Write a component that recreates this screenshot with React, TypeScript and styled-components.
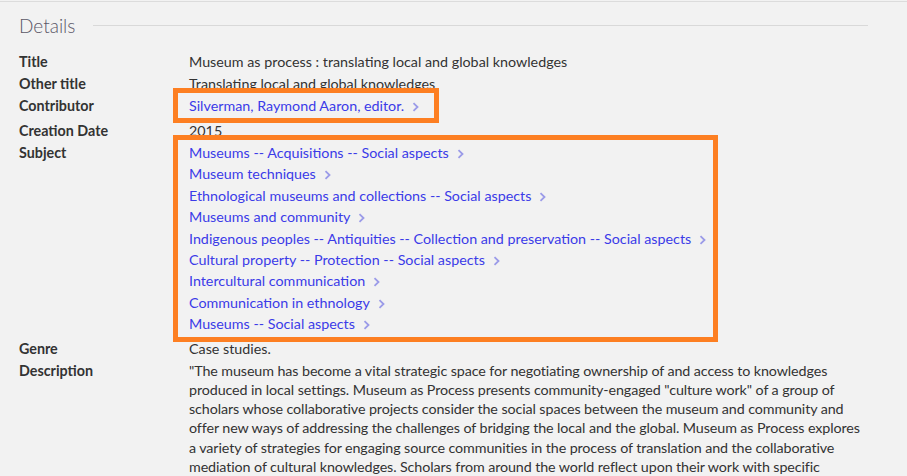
import React from 'react';
import styled, { createGlobalStyle } from 'styled-components';

const GlobalStyle = createGlobalStyle`
  body {
    margin: 0;
    background: #f2f2f2;
    font-family: Lato, "Liberation Sans", sans-serif;
    color: #333;
  }
`;

const Page = styled.div`
  margin-top: 1px;
  border-top: 1px solid #dcdcdc;
  padding: 0 39px 0 19px;
  overflow: hidden;
`;

const Header = styled.div`
  display: flex;
  align-items: center;
  gap: 18px;
  height: 46px;
  margin-bottom: 3px;
`;

const HeaderTitle = styled.h2`
  margin: 0;
  font-size: 19px;
  font-weight: 300;
  color: #5b5868;
`;

const HeaderRule = styled.div`
  flex: 1;
  height: 1px;
  background: #d9d9d9;
`;

const List = styled.div`
  display: grid;
  grid-template-columns: 170px 1fr;
  font-size: 14.3px;
  line-height: 22px;
`;

type CellProps = { $gap?: boolean; $dense?: boolean };

const Label = styled.div<CellProps>`
  font-weight: 700;
  color: #333;
  padding-bottom: ${({ $gap }) => ($gap ? '3px' : '0')};
  padding-top: ${({ $dense }) => ($dense ? '1.5px' : '0')};
  line-height: ${({ $dense }) => ($dense ? '19.1px' : '22px')};
`;

const Value = styled.div<CellProps>`
  color: #333;
  min-width: 0;
  padding-bottom: ${({ $gap }) => ($gap ? '3px' : '0')};
  padding-top: ${({ $dense }) => ($dense ? '1.5px' : '0')};
  line-height: ${({ $dense }) => ($dense ? '19.1px' : '22px')};
`;

const Highlight = styled.div<{ $right: number }>`
  position: relative;
  display: inline-block;
  vertical-align: top;

  &::after {
    content: '';
    position: absolute;
    top: -7px;
    bottom: -7px;
    left: -16px;
    right: ${({ $right }) => $right}px;
    border: 5px solid #fd7f22;
    pointer-events: none;
  }
`;

const LinkItem = styled.div`
  color: #3b3be8;
  white-space: nowrap;
  line-height: 21.4px;
`;

const Chevron = styled.svg`
  width: 7px;
  height: 10px;
  margin-left: 8px;
  vertical-align: -1px;
`;

const DescLine = styled.div`
  white-space: nowrap;
  letter-spacing: -0.1px;
`;

const Link = ({ children }: { children: React.ReactNode }) => (
  <LinkItem>
    {children}
    <Chevron viewBox="0 0 7 10">
      <path d="M1.5 1.2l4 3.8-4 3.8" fill="none" stroke="#9b9be8" strokeWidth="1.8" />
    </Chevron>
  </LinkItem>
);

const subjects = [
  'Museums -- Acquisitions -- Social aspects',
  'Museum techniques',
  'Ethnological museums and collections -- Social aspects',
  'Museums and community',
  'Indigenous peoples -- Antiquities -- Collection and preservation -- Social aspects',
  'Cultural property -- Protection -- Social aspects',
  'Intercultural communication',
  'Communication in ethnology',
  'Museums -- Social aspects',
];

const descriptionLines = [
  '"The museum has become a vital strategic space for negotiating ownership of and access to knowledges',
  'produced in local settings. Museum as Process presents community-engaged "culture work" of a group of',
  'scholars whose collaborative projects consider the social spaces between the museum and community and',
  'offer new ways of addressing the challenges of bridging the local and the global. Museum as Process explores',
  'a variety of strategies for engaging source communities in the process of translation and the collaborative',
  'mediation of cultural knowledges. Scholars from around the world reflect upon their work with specific',
];

const App = () => {
  return (
    <>
      <GlobalStyle />
      <Page>
        <Header>
          <HeaderTitle>Details</HeaderTitle>
          <HeaderRule />
        </Header>
        <List>
          <Label>Title</Label>
          <Value>Museum as process : translating local and global knowledges</Value>

          <Label>Other title</Label>
          <Value>Translating local and global knowledges</Value>

          <Label $gap>Contributor</Label>
          <Value $gap>
            <Highlight $right={-20}>
              <Link>Silverman, Raymond Aaron, editor.</Link>
            </Highlight>
          </Value>

          <Label>Creation Date</Label>
          <Value>2015</Value>

          <Label $gap>Subject</Label>
          <Value $gap>
            <Highlight $right={-12}>
              {subjects.map((s) => (
                <Link key={s}>{s}</Link>
              ))}
            </Highlight>
          </Value>

          <Label>Genre</Label>
          <Value>Case studies.</Value>

          <Label $dense>Description</Label>
          <Value $dense>
            {descriptionLines.map((line) => (
              <DescLine key={line}>{line}</DescLine>
            ))}
          </Value>
        </List>
      </Page>
    </>
  );
};

export default App;
